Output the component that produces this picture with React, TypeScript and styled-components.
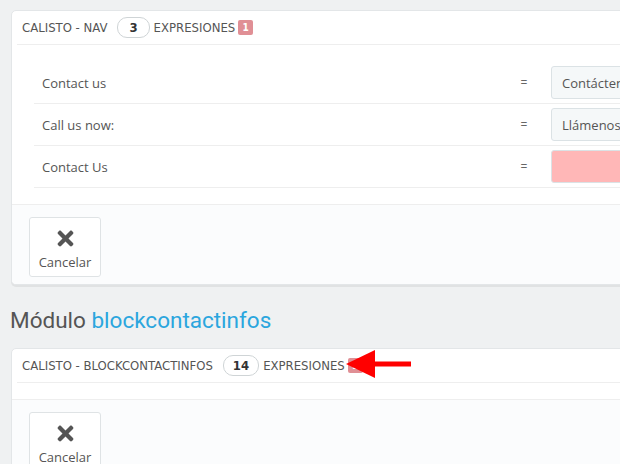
import styled, {createGlobalStyle} from 'styled-components';
import {FaTimes} from 'react-icons/fa';

const GlobalStyle = createGlobalStyle`
    html, body {
        margin: 0;
        padding: 0;
        background: #eff1f2;
        overflow: hidden;
    }
    body {
        font-family: 'Open Sans', 'Liberation Sans', sans-serif;
        color: #555;
    }
`;

const Page = styled.div`
    position: relative;
    padding: 10px 0 0 11px;
    width: 760px;
`;

const Panel = styled.div`
    background: #fff;
    border: 1px solid #e3e6e8;
    border-radius: 5px;
    box-shadow: 0 2px 0 rgba(0, 0, 0, 0.06);
    overflow: hidden;
`;

const PanelHeader = styled.div`
    display: flex;
    align-items: center;
    height: 33px;
    margin: 0 5px;
    padding: 0 5px;
    border-bottom: 1px solid #eeeeee;
    font-family: 'DejaVu Sans Condensed', 'DejaVu Sans', sans-serif;
    font-size: 13px;
    text-transform: uppercase;
    color: #555;
`;

const Count = styled.span`
    display: inline-flex;
    align-items: center;
    justify-content: center;
    height: 19px;
    padding: 0 ${p => (p.$wide ? 9 : 11)}px;
    margin: 0 4px 0 10px;
    border: 1px solid #cfd4d6;
    border-radius: 10px;
    font-weight: bold;
    font-size: 13px;
    color: #333;
`;

const Alert = styled.span`
    display: inline-flex;
    align-items: center;
    justify-content: center;
    width: 15px;
    height: 15px;
    margin-left: 3px;
    border-radius: 2px;
    background: #e08f95;
    color: #fff;
    font-size: 10px;
    font-weight: bold;
`;

const PanelBody = styled.div`
    padding: ${p => (p.$empty ? '16px 0 0' : '17px 0 16px 22px')};
`;

const Row = styled.div`
    display: grid;
    grid-template-columns: 455px 20px 200px;
    column-gap: 17px;
    align-items: center;
    height: 41px;
    padding-left: 8px;
    border-bottom: 1px solid #eeeeee;
    font-size: 13px;
`;

const Label = styled.span`
    color: #555;
`;

const Equals = styled.span`
    text-align: center;
    color: #666;
    font-size: 12px;
`;

const Field = styled.div`
    height: 31px;
    display: flex;
    align-items: center;
    padding: 0 10px;
    border: 1px solid #dbe2e5;
    border-radius: 3px;
    background: ${p => (p.$missing ? '#ffb7b7' : '#f5f8f9')};
    color: #555;
    font-size: 13px;
    white-space: nowrap;
`;

const PanelFooter = styled.div`
    padding: 12px 17px 7px;
    border-top: 1px solid #eeeeee;
    background: #fbfcfd;
`;

const CancelButton = styled.button`
    display: flex;
    flex-direction: column;
    align-items: center;
    justify-content: center;
    gap: 3px;
    width: 72px;
    height: 60px;
    padding: 4px 0 0;
    background: #fff;
    border: 1px solid #dfe3e5;
    border-radius: 3px;
    font-family: 'Open Sans', 'Liberation Sans', sans-serif;
    font-size: 13px;
    color: #555;
`;

const ModuleTitle = styled.h2`
    margin: 22px 0 15px -1px;
    font-family: Roboto, 'Noto Sans', sans-serif;
    font-weight: 400;
    font-size: 22.5px;
    line-height: 26px;
    color: #555;
`;

const ModuleName = styled.span`
    color: #2ba6de;
`;

const Pointer = styled.svg`
    position: absolute;
    left: 346px;
    top: 349px;
`;

const rows = [
    {label: 'Contact us', value: 'Contáctenos'},
    {label: 'Call us now:', value: 'Llámenos ahora:'},
    {label: 'Contact Us', value: ''},
];

const Header = ({title, count, errors}: {title: string; count: number; errors: number}) => (
    <PanelHeader>
        {title}
        <Count $wide={count > 9}>{count}</Count>
        Expresiones
        <Alert>{errors}</Alert>
    </PanelHeader>
);

const Footer = () => (
    <PanelFooter>
        <CancelButton type='button'>
            <FaTimes size={23} color='#555' />
            Cancelar
        </CancelButton>
    </PanelFooter>
);

const App = () => (
    <>
        <GlobalStyle />
        <Page>
            <Panel>
                <Header title='Calisto - nav' count={3} errors={1} />
                <PanelBody>
                    {rows.map(row => (
                        <Row key={row.label}>
                            <Label>{row.label}</Label>
                            <Equals>=</Equals>
                            <Field $missing={!row.value}>{row.value}</Field>
                        </Row>
                    ))}
                </PanelBody>
                <Footer />
            </Panel>
            <ModuleTitle>
                Módulo <ModuleName>blockcontactinfos</ModuleName>
            </ModuleTitle>
            <Panel>
                <Header title='Calisto - blockcontactinfos' count={14} errors={1} />
                <PanelBody $empty />
                <Footer />
            </Panel>
            <Pointer width='66' height='30' viewBox='0 0 66 30'>
                <polygon points='0,15 29,1 29,29' fill='#ff0000' />
                <rect x='28' y='12.5' width='37' height='5' fill='#ff0000' />
            </Pointer>
        </Page>
    </>
);

export default App;
